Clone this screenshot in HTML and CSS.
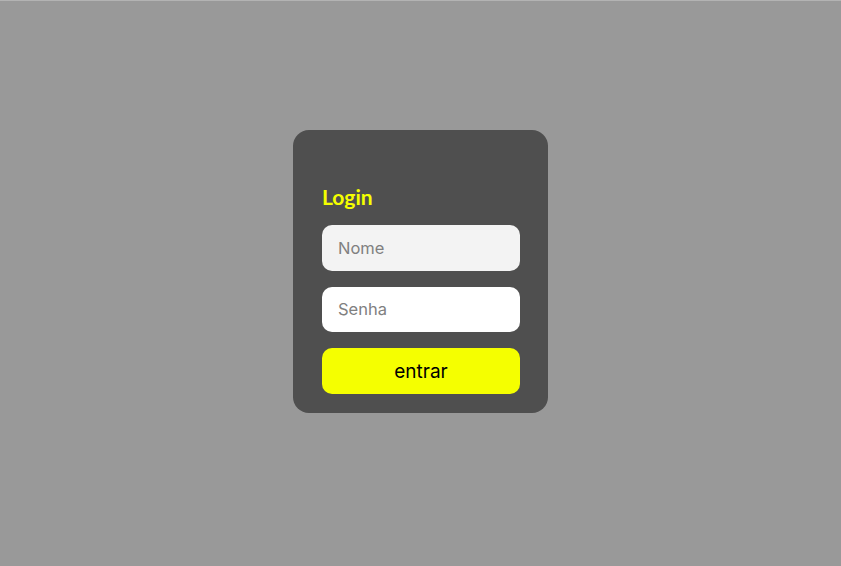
FILE: index.html
```html
<!DOCTYPE html>
<html lang="pt">
<head>
<meta charset="utf-8">
<title>Login</title>
<link rel="stylesheet" href="styles.css">
</head>
<body>
<main class="page">
  <form class="card">
    <h1 class="title">Login</h1>
    <input class="field field-name" type="text" placeholder="Nome">
    <input class="field field-pass" type="password" placeholder="Senha">
    <button class="btn" type="button">entrar</button>
  </form>
</main>
</body>
</html>
```
FILE: styles.css
```css
html, body {
  margin: 0;
  padding: 0;
}
body {
  background: #999999;
  border-top: 1px solid #b3b3b3;
  box-sizing: border-box;
  min-height: 100vh;
  font-family: Inter, "Liberation Sans", sans-serif;
}
.page {
  min-height: calc(100vh - 1px);
  display: flex;
  align-items: center;
  justify-content: center;
  padding-bottom: 24px;
  box-sizing: border-box;
}
.card {
  width: 255px;
  height: 283px;
  box-sizing: border-box;
  background: #4f4f4f;
  border-radius: 16px;
  padding: 55px 28px 19px 29px;
  display: flex;
  flex-direction: column;
  gap: 16px;
}
.title {
  margin: 0;
  font-family: Lato, "Open Sans", sans-serif;
  font-weight: 700;
  font-size: 21px;
  line-height: 24px;
  color: #f5ff00;
}
.field {
  height: 46px;
  border: none;
  border-radius: 10px;
  padding: 0 16px;
  font-family: Inter, sans-serif;
  font-size: 16.5px;
  color: #333;
  outline: none;
  box-sizing: border-box;
  width: 100%;
}
.field::placeholder {
  color: #808080;
}
.field-name { background: #f3f3f3; }
.field-pass { background: #ffffff; }
.btn {
  height: 46px;
  border: none;
  border-radius: 10px;
  background: #f5ff00;
  font-family: Inter, sans-serif;
  font-size: 19px;
  color: #000;
  cursor: pointer;
}
```
